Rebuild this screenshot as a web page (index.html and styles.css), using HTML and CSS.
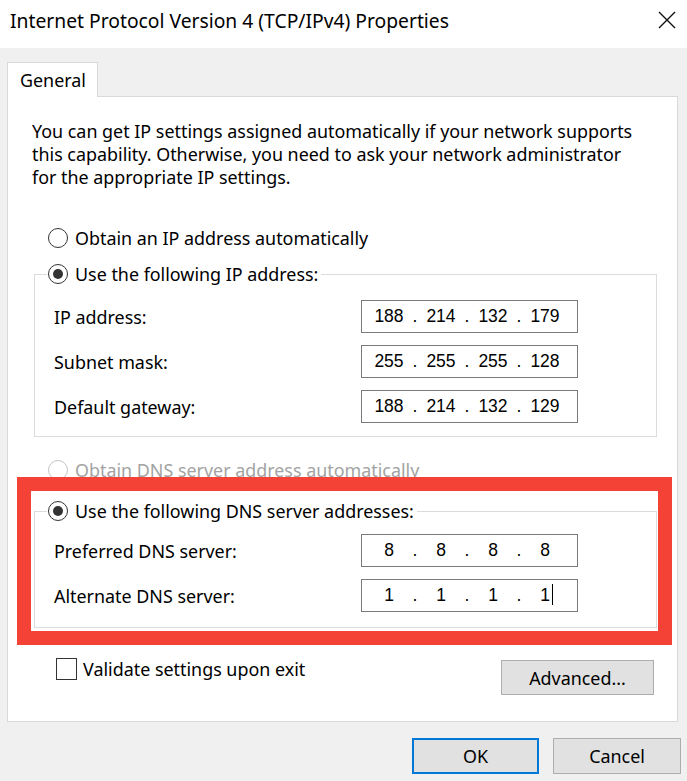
FILE: index.html
```html
<!DOCTYPE html>
<html lang="en">
<head>
<meta charset="utf-8">
<title>Internet Protocol Version 4 (TCP/IPv4) Properties</title>
<link rel="stylesheet" href="styles.css">
</head>
<body>
<div class="window">
  <header class="titlebar">
    <span class="title">Internet Protocol Version 4 (TCP/IPv4) Properties</span>
    <svg class="close" width="20" height="18" viewBox="0 0 20 18" aria-label="Close">
      <path d="M2 1 L18 17 M18 1 L2 17" stroke="#111" stroke-width="1.4" fill="none"/>
    </svg>
  </header>

  <div class="dialog-body">
    <div class="tabs"><div class="tab">General</div></div>

    <section class="panel">
      <p class="intro">You can get IP settings assigned automatically if your network supports<br>this capability. Otherwise, you need to ask your network administrator<br>for the appropriate IP settings.</p>

      <div class="radio-row first"><span class="radio"></span><span>Obtain an IP address automatically</span></div>

      <fieldset class="group ip-group">
        <legend><span class="legend-inner"><span class="radio checked"></span><span>Use the following IP address:</span></span></legend>
        <div class="field">
          <span class="label">IP address:</span>
          <div class="ipbox"><span class="seg">188</span><span class="dot">.</span><span class="seg">214</span><span class="dot">.</span><span class="seg">132</span><span class="dot">.</span><span class="seg">179</span></div>
        </div>
        <div class="field">
          <span class="label">Subnet mask:</span>
          <div class="ipbox"><span class="seg">255</span><span class="dot">.</span><span class="seg">255</span><span class="dot">.</span><span class="seg">255</span><span class="dot">.</span><span class="seg">128</span></div>
        </div>
        <div class="field">
          <span class="label">Default gateway:</span>
          <div class="ipbox"><span class="seg">188</span><span class="dot">.</span><span class="seg">214</span><span class="dot">.</span><span class="seg">132</span><span class="dot">.</span><span class="seg">129</span></div>
        </div>
      </fieldset>

      <div class="radio-row disabled"><span class="radio"></span><span>Obtain DNS server address automatically</span></div>

      <fieldset class="group dns-group">
        <legend><span class="legend-inner"><span class="radio checked"></span><span>Use the following DNS server addresses:</span></span></legend>
        <div class="field">
          <span class="label">Preferred DNS server:</span>
          <div class="ipbox"><span class="seg">8</span><span class="dot">.</span><span class="seg">8</span><span class="dot">.</span><span class="seg">8</span><span class="dot">.</span><span class="seg">8</span></div>
        </div>
        <div class="field">
          <span class="label">Alternate DNS server:</span>
          <div class="ipbox"><span class="seg">1</span><span class="dot">.</span><span class="seg">1</span><span class="dot">.</span><span class="seg">1</span><span class="dot">.</span><span class="seg">1<span class="caret"></span></span></div>
        </div>
      </fieldset>

      <div class="options">
        <div class="check-row"><span class="checkbox"></span><span>Validate settings upon exit</span></div>
        <button class="btn advanced" type="button">Advanced...</button>
      </div>

      <div class="highlight"></div>
    </section>

    <div class="actions">
      <button class="btn primary" type="button">OK</button>
      <button class="btn" type="button">Cancel</button>
    </div>
  </div>
</div>
</body>
</html>
```

FILE: styles.css
```css
* { box-sizing: border-box; }

body {
  margin: 0;
  background: #f0f0f0;
  font-family: "Noto Sans", "Open Sans", sans-serif;
  font-size: 17.9px;
  color: #000;
}

.titlebar {
  height: 48px;
  background: #fff;
  display: flex;
  justify-content: space-between;
  align-items: flex-start;
  padding: 7px 10px 0 10px;
}

.title {
  font-size: 19.3px;
  line-height: 28px;
}

.close {
  margin-top: 4px;
}

.dialog-body {
  padding: 14px 6px 0 7px;
}

.tabs {
  display: flex;
}

.tab {
  position: relative;
  z-index: 1;
  width: 91px;
  height: 35px;
  margin-bottom: -1px;
  padding-left: 12px;
  display: flex;
  align-items: center;
  background: #fff;
  border: 1px solid #d9d9d9;
  border-bottom: none;
}

.panel {
  position: relative;
  margin-right: 3px;
  background: #fff;
  border: 1px solid #d9d9d9;
  padding: 23px 20px 26px 26px;
}

.intro {
  margin: 0 0 0 -2px;
  line-height: 23px;
}

.radio-row {
  height: 24px;
  margin-left: 14px;
  display: flex;
  align-items: center;
}

.radio-row.first {
  margin-top: 37px;
}

.radio-row.disabled {
  margin-top: 21px;
  color: #a3a3a3;
}

.radio {
  width: 20px;
  height: 20px;
  margin-right: 7px;
  border: 1px solid #333;
  border-radius: 50%;
  display: inline-flex;
  align-items: center;
  justify-content: center;
  flex: none;
}

.radio.checked::after {
  content: "";
  width: 10px;
  height: 10px;
  border-radius: 50%;
  background: #333;
}

.radio-row.disabled .radio {
  border-color: #c4c4c4;
}

.group {
  margin: 0;
  min-width: 0;
  border: 1px solid #dcdcdc;
  padding: 14px 19px 13px;
}

.ip-group {
  margin-top: 12px;
}

.dns-group {
  margin-top: 17px;
  padding: 11px 19px 15px;
}

legend {
  padding: 0 3px 0 1px;
  margin-left: -7px;
}

.legend-inner {
  height: 24px;
  display: flex;
  align-items: center;
}

.field {
  height: 33px;
  display: flex;
  align-items: center;
}

.field + .field {
  margin-top: 12px;
}

.label {
  width: 307px;
  flex: none;
}

.ipbox {
  width: 217px;
  height: 33px;
  border: 1px solid #7a7a7a;
  padding-left: 7px;
  display: flex;
  align-items: center;
  font-family: "Liberation Sans", Arial, sans-serif;
  font-size: 17.5px;
}

.seg {
  width: 40px;
  text-align: center;
  position: relative;
}

.dot {
  width: 12px;
  text-align: center;
}

.caret {
  position: absolute;
  top: -1px;
  margin-left: 2px;
  width: 1.5px;
  height: 21px;
  background: #000;
}

.options {
  margin-top: 29px;
  padding: 0 3px 0 22px;
  display: flex;
  justify-content: space-between;
  align-items: flex-start;
}

.check-row {
  display: flex;
  align-items: center;
  height: 23px;
}

.checkbox {
  width: 21px;
  height: 22px;
  margin-right: 6px;
  border: 1px solid #333;
  flex: none;
}

.btn {
  font: inherit;
  color: #000;
  background: #e1e1e1;
  border: 1px solid #adadad;
  height: 36px;
  width: 128px;
  padding: 0;
}

.btn.advanced {
  margin-top: 3px;
  width: 153px;
  height: 35px;
}

.btn.primary {
  width: 127px;
  border: 2px solid #0078d7;
}

.actions {
  margin-top: 16px;
  display: flex;
  justify-content: flex-end;
  gap: 14px;
}

.highlight {
  position: absolute;
  left: 9px;
  top: 380px;
  width: 655px;
  height: 168px;
  border: 14px solid #f44336;
  pointer-events: none;
}
```
